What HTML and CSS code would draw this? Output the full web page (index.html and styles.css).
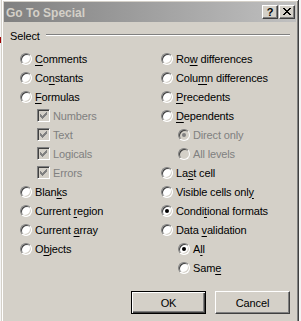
FILE: index.html
```html
<!DOCTYPE html>
<html lang="en">
<head>
  <meta charset="UTF-8">
  <title>Go To Special</title>
  <link rel="stylesheet" href="styles.css">
</head>
<body>
  <div class="dialog">
    <div class="titlebar">
      <span class="title">Go To Special</span>
      <div class="caption-buttons">
        <span class="cap-btn help">?</span>
        <span class="cap-btn close">
          <svg width="8" height="7" viewBox="0 0 8 7" shape-rendering="crispEdges">
            <path d="M0 0h2v1h-2z M6 0h2v1h-2z M1 1h2v1h-2z M5 1h2v1h-2z M2 2h4v1h-4z M3 3h2v1h-2z M2 4h4v1h-4z M1 5h2v1h-2z M5 5h2v1h-2z M0 6h2v1h-2z M6 6h2v1h-2z" fill="#000"/>
          </svg>
        </span>
      </div>
    </div>

    <div class="content">
      <div class="group-head">
        <span>Select</span>
        <span class="etch"></span>
      </div>

      <div class="options">
        <div class="col">
          <div class="row"><span class="radio"></span><span><u>C</u>omments</span></div>
          <div class="row"><span class="radio"></span><span>Co<u>n</u>stants</span></div>
          <div class="row"><span class="radio"></span><span><u>F</u>ormulas</span></div>
          <div class="row sub disabled"><span class="check"><svg width="13" height="13" viewBox="0 0 13 13" shape-rendering="crispEdges"><path d="M3 5h1v3h-1z M4 6h1v3h-1z M5 7h1v3h-1z M6 6h1v3h-1z M7 5h1v3h-1z M8 4h1v3h-1z M9 3h1v3h-1z" fill="#808080"/></svg></span><span>Numbers</span></div>
          <div class="row sub disabled"><span class="check"><svg width="13" height="13" viewBox="0 0 13 13" shape-rendering="crispEdges"><path d="M3 5h1v3h-1z M4 6h1v3h-1z M5 7h1v3h-1z M6 6h1v3h-1z M7 5h1v3h-1z M8 4h1v3h-1z M9 3h1v3h-1z" fill="#808080"/></svg></span><span>Text</span></div>
          <div class="row sub disabled"><span class="check"><svg width="13" height="13" viewBox="0 0 13 13" shape-rendering="crispEdges"><path d="M3 5h1v3h-1z M4 6h1v3h-1z M5 7h1v3h-1z M6 6h1v3h-1z M7 5h1v3h-1z M8 4h1v3h-1z M9 3h1v3h-1z" fill="#808080"/></svg></span><span>Logicals</span></div>
          <div class="row sub disabled"><span class="check"><svg width="13" height="13" viewBox="0 0 13 13" shape-rendering="crispEdges"><path d="M3 5h1v3h-1z M4 6h1v3h-1z M5 7h1v3h-1z M6 6h1v3h-1z M7 5h1v3h-1z M8 4h1v3h-1z M9 3h1v3h-1z" fill="#808080"/></svg></span><span>Errors</span></div>
          <div class="row"><span class="radio"></span><span>Blan<u>k</u>s</span></div>
          <div class="row"><span class="radio"></span><span>Current <u>r</u>egion</span></div>
          <div class="row"><span class="radio"></span><span>Current <u>a</u>rray</span></div>
          <div class="row"><span class="radio"></span><span>O<u>b</u>jects</span></div>
        </div>

        <div class="col">
          <div class="row"><span class="radio"></span><span>Ro<u>w</u> differences</span></div>
          <div class="row"><span class="radio"></span><span>Colu<u>m</u>n differences</span></div>
          <div class="row"><span class="radio"></span><span><u>P</u>recedents</span></div>
          <div class="row"><span class="radio"></span><span><u>D</u>ependents</span></div>
          <div class="row sub disabled"><span class="radio checked"></span><span>Direct only</span></div>
          <div class="row sub disabled"><span class="radio"></span><span>All levels</span></div>
          <div class="row"><span class="radio"></span><span>La<u>s</u>t cell</span></div>
          <div class="row"><span class="radio"></span><span>Visible cells onl<u>y</u></span></div>
          <div class="row"><span class="radio checked"></span><span>Condi<u>t</u>ional formats</span></div>
          <div class="row"><span class="radio"></span><span>Data <u>v</u>alidation</span></div>
          <div class="row sub"><span class="radio checked"></span><span>A<u>l</u>l</span></div>
          <div class="row sub"><span class="radio"></span><span>Sam<u>e</u></span></div>
        </div>
      </div>

      <div class="actions">
        <button class="btn default">OK</button>
        <button class="btn">Cancel</button>
      </div>
    </div>
  </div>
</body>
</html>
```

FILE: styles.css
```css
html, body {
  margin: 0;
  padding: 0;
  height: 321px;
  overflow: hidden;
}
body {
  background: linear-gradient(#a00000, #a00000) 0 37px / 1px 6px no-repeat, #f4f4f4;
  font-family: "Liberation Sans", Arial, sans-serif;
  font-size: 11px;
  letter-spacing: -0.15px;
  color: #000;
}
/* the dialog runs a little past the bottom of the shot */
.dialog {
  margin: -1px 0 0 1px;
  width: 298px;
  height: 324px;
  box-sizing: border-box;
  padding: 2px;
  background: #d4d0c8;
  border: 1px solid;
  border-color: #d4d0c8 #404040 #404040 #d4d0c8;
  box-shadow: inset 1px 1px 0 #fff, inset -1px -1px 0 #808080;
}
.titlebar {
  height: 20px;
  display: flex;
  align-items: center;
  justify-content: space-between;
  padding: 0 1px 0 2px;
  background: linear-gradient(to right, #808080, #c0c0c0);
}
.title {
  font-weight: bold;
  font-size: 12px;
  color: #d4d0c8;
  line-height: 18px;
  padding-top: 1px;
  letter-spacing: 0;
}
.caption-buttons {
  display: flex;
  gap: 1px;
}
.cap-btn {
  width: 16px;
  height: 14px;
  box-sizing: border-box;
  display: flex;
  align-items: center;
  justify-content: center;
  background: #d4d0c8;
  border: 1px solid;
  border-color: #fff #404040 #404040 #fff;
  box-shadow: inset -1px -1px 0 #808080;
}
.help {
  font-weight: bold;
  font-size: 11px;
  line-height: 12px;
  letter-spacing: 0;
}
.close svg {
  display: block;
  margin: 0 1px 1px 0;
}
.content {
  padding: 5px 6px 0 6px;
}
.group-head {
  display: flex;
  line-height: 19px;
}
.etch {
  flex: 1;
  height: 0;
  margin: 7px 0 0 6px;
  border-top: 1px solid #808080;
  border-bottom: 1px solid #fff;
}
.options {
  display: grid;
  grid-template-columns: 141px 1fr;
  margin-top: 3px;
  padding-left: 10px;
}
.row {
  height: 19px;
  display: flex;
  align-items: center;
  white-space: nowrap;
}
.row u {
  text-underline-offset: 2px;
}
.row.sub {
  padding-left: 17px;
}
.row.disabled {
  color: #808080;
}
.radio {
  position: relative;
  width: 12px;
  height: 12px;
  flex: none;
  box-sizing: border-box;
  margin-right: 3px;
  border-radius: 50%;
  background: #fff;
  border: 1px solid;
  border-color: #808080 #fff #fff #808080;
  box-shadow: inset 1px 1px 0 #404040, inset -1px -1px 0 #d4d0c8;
}
.disabled .radio {
  background: #d4d0c8;
}
.radio.checked::after {
  content: "";
  position: absolute;
  left: 3px;
  top: 3px;
  width: 4px;
  height: 4px;
  border-radius: 50%;
  background: #000;
}
.disabled .radio.checked::after {
  background: #808080;
}
.check {
  width: 13px;
  height: 13px;
  flex: none;
  box-sizing: border-box;
  margin-right: 3px;
  position: relative;
  background: #d4d0c8;
  border: 1px solid;
  border-color: #808080 #fff #fff #808080;
  box-shadow: inset 1px 1px 0 #404040, inset -1px -1px 0 #d4d0c8;
}
.check svg {
  position: absolute;
  left: -1px;
  top: -1px;
}
.actions {
  display: flex;
  justify-content: flex-end;
  gap: 9px;
  margin-top: 14px;
}
.btn {
  width: 75px;
  height: 23px;
  padding: 0;
  box-sizing: border-box;
  font-family: inherit;
  font-size: 11px;
  letter-spacing: -0.15px;
  color: #000;
  background: #d4d0c8;
  border: 1px solid;
  border-color: #fff #404040 #404040 #fff;
  box-shadow: inset -1px -1px 0 #808080;
}
.btn.default {
  border-color: #000;
  box-shadow: inset 1px 1px 0 #fff, inset -1px -1px 0 #404040, inset -2px -2px 0 #808080;
}
```
